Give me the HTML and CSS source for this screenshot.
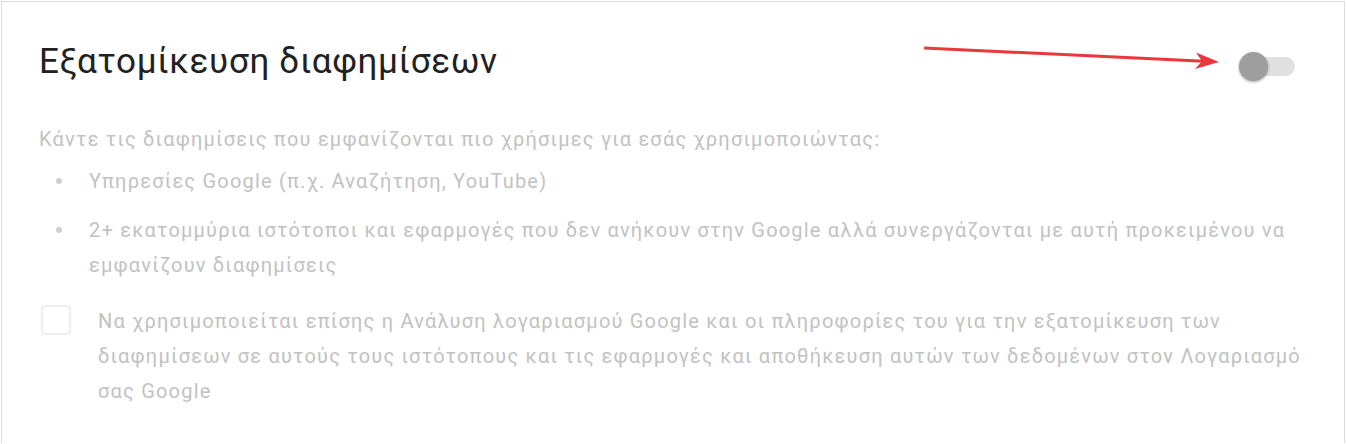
FILE: index.html
```html
<!DOCTYPE html>
<html lang="el">
<head>
    <meta charset="UTF-8">
    <meta name="viewport" content="width=device-width, initial-scale=1.0">
    <title>Εξατομίκευση διαφημίσεων</title>
    <link rel="stylesheet" href="styles.css">
</head>
<body>
    <div class="card">
        <div class="card-header">
            <h1>Εξατομίκευση διαφημίσεων</h1>
            <div class="toggle"></div>
        </div>
        <p class="lead">Κάντε τις διαφημίσεις που εμφανίζονται πιο χρήσιμες για εσάς χρησιμοποιώντας:</p>
        <ul class="sources">
            <li>Υπηρεσίες Google (π.χ. Αναζήτηση, YouTube)</li>
            <li>2+ εκατομμύρια ιστότοποι και εφαρμογές που δεν ανήκουν στην Google αλλά συνεργάζονται με αυτή προκειμένου να εμφανίζουν διαφημίσεις</li>
        </ul>
        <label class="option">
            <span class="checkbox"></span>
            <span class="option-text">Να χρησιμοποιείται επίσης η Ανάλυση λογαριασμού Google και οι πληροφορίες του για την εξατομίκευση των διαφημίσεων σε αυτούς τους ιστότοπους και τις εφαρμογές και αποθήκευση αυτών των δεδομένων στον Λογαριασμό σας Google</span>
        </label>
    </div>

    <!-- annotation arrow -->
    <svg class="arrow" width="1346" height="444" viewBox="0 0 1346 444">
        <line x1="924" y1="48" x2="1204" y2="61.3" stroke="#e8383d" stroke-width="3"/>
        <polygon points="1219,62 1196,52.5 1202,61.3 1195,69" fill="#e8383d"/>
    </svg>
</body>
</html>
```

FILE: styles.css
```css
body {
    margin: 0;
    background: white;
    font-family: Roboto, "Noto Sans", sans-serif;
}
.card {
    margin: 1px 1px 0 1px;
    border: 1px solid #dcdcdc;
    border-bottom: none;
    height: 442px;
    box-sizing: border-box;
    padding: 40px 49px 0 37px;
}
.card-header {
    display: flex;
    align-items: center;
    justify-content: space-between;
}
h1 {
    margin: 0;
    font-size: 35px;
    line-height: 40px;
    font-weight: 400;
    letter-spacing: 0.7px;
    color: #212121;
}
.toggle {
    position: relative;
    width: 45px;
    height: 19px;
    margin-top: 8px;
    border-radius: 10px;
    background: #e0e0e0;
}
.toggle::before {
    content: "";
    position: absolute;
    left: -11px;
    top: -5px;
    width: 29px;
    height: 29px;
    border-radius: 50%;
    background: #9e9e9e;
    box-shadow: 0 1px 3px rgba(0, 0, 0, 0.35);
}
.lead,
.sources,
.option {
    font-size: 20px;
    line-height: 35px;
    letter-spacing: 1.2px;
    color: #c2c2c2;
}
.lead {
    margin: 40px 0 0 0;
}
.sources {
    list-style: none;
    margin: 7px 0 0 0;
    padding: 0;
}
.sources li {
    display: flex;
    margin-bottom: 14px;
}
.sources li::before {
    content: "";
    flex: none;
    width: 6px;
    height: 6px;
    margin: 14px 27px 0 17px;
    border-radius: 50%;
    background: #cfcfcf;
}
.option {
    display: flex;
    margin-top: 21px;
}
.checkbox {
    flex: none;
    width: 26px;
    height: 26px;
    margin: 1px 27px 0 2px;
    border: 2px solid #eeeeee;
    border-radius: 4px;
}
.option-text {
    margin-right: -25px;
}
.arrow {
    position: absolute;
    left: 0;
    top: 0;
    pointer-events: none;
}
```
